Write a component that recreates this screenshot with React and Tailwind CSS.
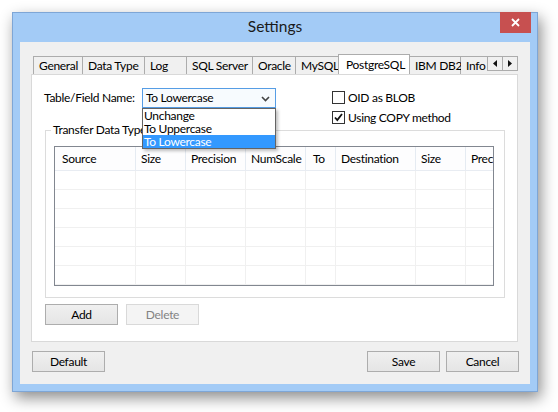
import React from 'react';

const tabs = [
  { name: 'General', w: 'w-[50px] border-l' },
  { name: 'Data Type', w: 'w-[62px]' },
  { name: 'Log', w: 'w-[42px]' },
  { name: 'SQL Server', w: 'w-[66px]' },
  { name: 'Oracle', w: 'w-[43px]' },
  { name: 'MySQL', w: 'w-[43px]' },
  { name: 'PostgreSQL', w: 'w-[72px]', active: true },
  { name: 'IBM DB2', w: 'w-[51px]' },
  { name: 'Info', w: 'w-[40px]' },
];

const columns = [
  { name: 'Source', w: 'w-[81px]', pl: 'pl-[7px]' },
  { name: 'Size', w: 'w-[50px]', pl: 'pl-[5px]' },
  { name: 'Precision', w: 'w-[60px]', pl: 'pl-[5px]' },
  { name: 'NumScale', w: 'w-[60px]', pl: 'pl-[5px]' },
  { name: 'To', w: 'w-[30px]', pl: 'pl-[7px]' },
  { name: 'Destination', w: 'w-[80px]', pl: 'pl-[5px]' },
  { name: 'Size', w: 'w-[50px]', pl: 'pl-[5px]' },
  { name: 'Precision', w: 'w-[80px]', pl: 'pl-[5px]' },
];

const Checkbox = ({ checked, label }) => (
  <div className="flex items-center h-[13px]">
    <div className="w-[13px] h-[13px] border border-[#333333] bg-white flex items-center justify-center">
      {checked && (
        <svg width="11" height="11" viewBox="0 0 11 11">
          <path d="M2 5.5 L4.3 8 L9 2" fill="none" stroke="#111" strokeWidth="1.8" />
        </svg>
      )}
    </div>
    <span className="ml-[3px] whitespace-nowrap">{label}</span>
  </div>
);

const Button = ({ children, className = '', disabled }) => (
  <div
    className={`w-[73px] h-[21px] flex items-center justify-center border ${
      disabled
        ? 'border-[#d9d9d9] bg-[#f4f4f4] text-[#838383]'
        : 'border-[#adadad] bg-gradient-to-b from-[#f0f0f0] to-[#e5e5e5]'
    } ${className}`}
  >
    {children}
  </div>
);

export default function App() {
  return (
    <div className="min-h-screen bg-white pt-[12px] pl-[12px] font-['Lato',sans-serif] text-[12px] tracking-[-0.3px] text-black">
      <div className="w-[526px] h-[380px] bg-[#a3cbf6] border border-[#7ea6d6] shadow-[3px_6px_14px_rgba(0,0,0,0.45)] flex flex-col">
        {/* title bar */}
        <div className="h-[29px] relative flex items-center justify-center">
          <span className="text-[15.5px] tracking-normal text-[#1a1a1a] -mt-[1px]">Settings</span>
          <div className="absolute right-[6px] -top-px w-[31px] h-[21px] bg-[#c75050] flex items-center justify-center">
            <svg width="9" height="9" viewBox="0 0 9 9">
              <path d="M1 1 L8 8 M8 1 L1 8" stroke="#fff" strokeWidth="1.8" />
            </svg>
          </div>
        </div>

        {/* client */}
        <div className="mx-[7px] mb-[7px] flex-1 bg-[#f0f0f0] flex flex-col">
          <div className="ml-[11px] mt-[12px] w-[487px]">
            {/* tab strip */}
            <div className="flex items-end h-[20px] pl-[2px] relative">
              <div className="flex items-end w-[454px] overflow-hidden">
                {tabs.map((t) =>
                  t.active ? (
                    <div
                      key={t.name}
                      className={`${t.w} shrink-0 -ml-px h-[21px] -mb-px relative z-10 bg-white border-t border-l border-r border-[#acacac] pl-[7px] leading-[19px] whitespace-nowrap`}
                    >
                      {t.name}
                    </div>
                  ) : (
                    <div
                      key={t.name}
                      className={`${t.w} shrink-0 h-[18px] bg-[#f0f0f0] border-t border-r border-[#acacac] pl-[5px] leading-[17px] whitespace-nowrap`}
                    >
                      {t.name}
                    </div>
                  )
                )}
              </div>
              <div className="absolute left-[456px] top-[2px] flex">
                <div className="w-[16px] h-[15px] border border-[#acacac] bg-[#f0f0f0] flex items-center justify-center">
                  <svg width="4" height="7" viewBox="0 0 4 7">
                    <path d="M4 0 L0 3.5 L4 7 Z" fill="#111" />
                  </svg>
                </div>
                <div className="w-[16px] h-[15px] -ml-px border border-[#acacac] bg-[#f0f0f0] flex items-center justify-center">
                  <svg width="4" height="7" viewBox="0 0 4 7">
                    <path d="M0 0 L4 3.5 L0 7 Z" fill="#111" />
                  </svg>
                </div>
              </div>
            </div>

            {/* panel */}
            <div className="h-[268px] bg-white border border-[#d9d9d9]">
              <div className="h-[55px] flex pt-[13px] pl-[12px]">
                <div className="flex items-center h-[20px]">
                  <span className="w-[98px] whitespace-nowrap">Table/Field Name:</span>
                  <div className="relative w-[134px] h-[20px] border border-[#569de5] bg-[#f7fbfe] flex items-center pl-[3px]">
                    <span>To Lowercase</span>
                    <svg className="absolute right-[5px] top-[7px]" width="9" height="6" viewBox="0 0 9 6">
                      <path d="M1 1 L4.5 4.5 L8 1" fill="none" stroke="#444" strokeWidth="1.6" />
                    </svg>
                    {/* open list */}
                    <div className="absolute -left-px top-[19px] w-[134px] bg-white border border-[#646464] shadow-[2px_2px_3px_rgba(0,0,0,0.25)] z-20 leading-[13px]">
                      <div className="h-[13px] pl-[1px] whitespace-nowrap">Unchange</div>
                      <div className="h-[13px] pl-[1px] whitespace-nowrap">To Uppercase</div>
                      <div className="h-[13px] pl-[1px] whitespace-nowrap bg-[#3399ff] text-white">To Lowercase</div>
                    </div>
                  </div>
                </div>
                <div className="ml-[56px] pt-[3px] flex flex-col gap-[7px]">
                  <Checkbox label="OID as BLOB" />
                  <Checkbox checked label="Using COPY method" />
                </div>
              </div>

              {/* group box */}
              <div className="ml-[13px] w-[460px] h-[168px] border border-[#dcdcdc] relative">
                <span className="absolute -top-[9px] left-[5px] bg-white px-[2px] leading-[16px] whitespace-nowrap">
                  Transfer Data Type
                </span>
                <div className="mt-[15px] ml-[8px] w-[440px] h-[140px] border border-[#828790] overflow-hidden">
                  <div className="flex h-[24px] border-b border-[#e8ecf2] bg-[#fdfdfe]">
                    {columns.map((c, i) => (
                      <div
                        key={i}
                        className={`${c.w} ${c.pl} shrink-0 border-r border-[#e5ebf2] flex items-center whitespace-nowrap overflow-hidden`}
                      >
                        {c.name}
                      </div>
                    ))}
                  </div>
                  {[0, 1, 2, 3, 4, 5].map((r) => (
                    <div key={r} className="flex h-[19px] border-b border-[#f0f0f0]">
                      {columns.map((c, i) => (
                        <div key={i} className={`${c.w} shrink-0 border-r border-[#f0f0f0]`} />
                      ))}
                    </div>
                  ))}
                </div>
              </div>

              <div className="flex gap-[8px] ml-[13px] mt-[6px]">
                <Button>Add</Button>
                <Button disabled>Delete</Button>
              </div>
            </div>
          </div>

          {/* footer buttons */}
          <div className="flex mt-[9px] ml-[12px] mr-[11px]">
            <Button>Default</Button>
            <Button className="ml-auto border-[#3399ff]">Save</Button>
            <Button className="ml-[6px]">Cancel</Button>
          </div>
        </div>
      </div>
    </div>
  );
}
